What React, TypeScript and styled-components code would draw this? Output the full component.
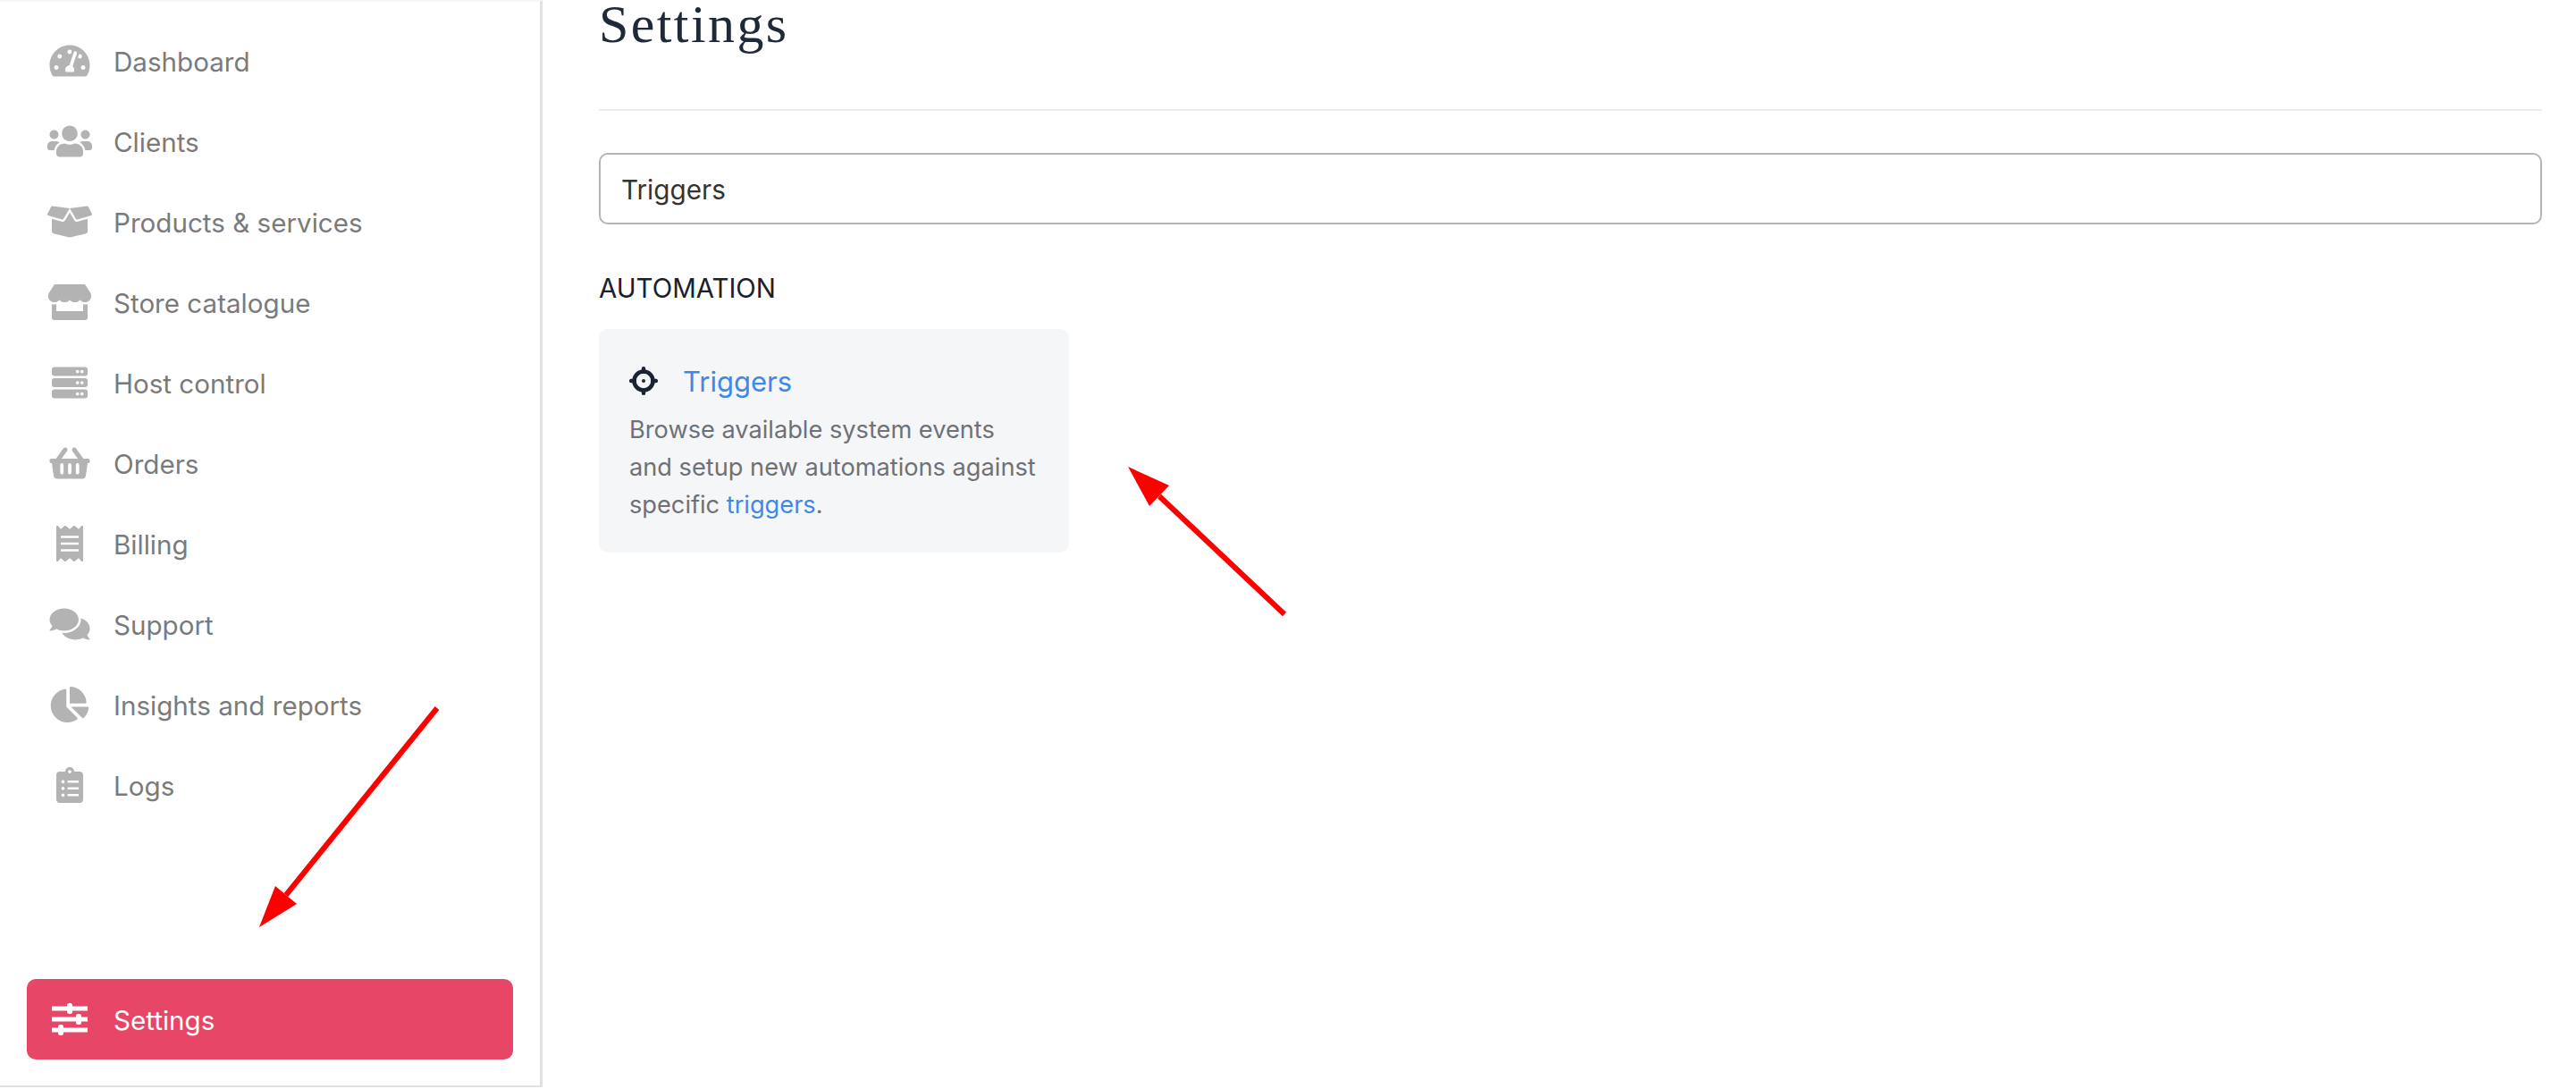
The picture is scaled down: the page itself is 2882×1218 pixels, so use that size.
import React from 'react'
import styled, { createGlobalStyle } from 'styled-components'
import {
  FaTachometerAlt,
  FaUsers,
  FaBoxOpen,
  FaStore,
  FaServer,
  FaShoppingBasket,
  FaReceipt,
  FaComments,
  FaChartPie,
  FaClipboardList,
} from 'react-icons/fa'

const GlobalStyle = createGlobalStyle`
  html, body {
    margin: 0;
    height: 100%;
    background: #fff;
    overflow: hidden;
  }
`

const Page = styled.div`
  position: relative;
  display: flex;
  width: 2882px;
  height: 1218px;
  overflow: hidden;
  font-family: Inter, 'Liberation Sans', sans-serif;
`

const Sidebar = styled.aside`
  display: flex;
  flex-direction: column;
  box-sizing: border-box;
  width: 607px;
  height: 1216px;
  padding: 21px 30px 29px 30px;
  border-top: 2px solid #f8f8f8;
  border-right: 3px solid #e0e0e0;
  border-bottom: 2px solid #e2e2e2;
`

const NavItem = styled.a<{ $active?: boolean }>`
  display: flex;
  align-items: center;
  height: 90px;
  margin-top: ${({ $active }) => ($active ? 'auto' : '0')};
  padding-left: 20px;
  border-radius: 10px;
  font-size: 29.6px;
  color: ${({ $active }) => ($active ? '#fff' : '#7a7a7a')};
  background: ${({ $active }) => ($active ? '#e84667' : 'transparent')};
`

const IconSlot = styled.span<{ $active?: boolean }>`
  display: flex;
  align-items: center;
  justify-content: center;
  flex: none;
  width: 56px;
  margin-right: 21px;
  color: ${({ $active }) => ($active ? '#fff' : '#b3b3b3')};

  svg {
    width: 56px;
    height: ${({ $active }) => ($active ? '36px' : '40px')};
  }
`

const NavLabel = styled.span`
  margin-top: 2px;
`

const Main = styled.main`
  flex: 1;
  padding: 0 38px 0 63px;
  min-width: 0;
`

const Title = styled.h1`
  margin: 0;
  height: 78px;
  padding-bottom: 44px;
  border-bottom: 2px solid #ececec;
  font-family: 'Liberation Serif', serif;
  font-size: 60px;
  font-weight: 400;
  line-height: 54px;
  letter-spacing: 2.4px;
  color: #1f2937;
`

const SearchInput = styled.input`
  display: block;
  box-sizing: border-box;
  width: 100%;
  height: 80px;
  margin-top: 47px;
  padding: 2px 23px 0;
  border: 2px solid #b5b5b5;
  border-radius: 10px;
  font-family: inherit;
  font-size: 29.7px;
  color: #333;
  outline: none;
`

const GroupLabel = styled.h2`
  margin: 54px 0 0;
  font-size: 29.4px;
  font-weight: 400;
  line-height: 36px;
  color: #1a202c;
`

const Card = styled.div`
  box-sizing: border-box;
  width: 526px;
  height: 250px;
  margin-top: 27px;
  padding: 36px 30px 0 34px;
  border-radius: 10px;
  background: #f5f6f8;
`

const CardHead = styled.div`
  display: flex;
  align-items: center;
  height: 44px;
`

const CardLink = styled.a`
  margin-left: 28px;
  font-size: 31px;
  color: #4088e8;
`

const CardText = styled.p`
  margin: 12px 0 0;
  font-size: 27.2px;
  line-height: 42px;
  color: #6f7177;
  white-space: nowrap;
`

const InlineLink = styled.a`
  color: #4088e8;
`

const ArrowLayer = styled.svg`
  position: absolute;
  top: 0;
  left: 0;
  width: 2882px;
  height: 1218px;
  pointer-events: none;
`

const SlidersIcon = () => (
  <svg viewBox="0 0 40 36" fill="#fff">
    <rect x="0" y="3.5" width="40" height="5" />
    <rect x="17" y="0" width="6" height="12" rx="2.5" />
    <rect x="0" y="15.5" width="40" height="5" />
    <rect x="27" y="12" width="6" height="12" rx="2.5" />
    <rect x="0" y="27.5" width="40" height="5" />
    <rect x="7" y="24" width="6" height="12" rx="2.5" />
  </svg>
)

const TargetIcon = () => (
  <svg width="32" height="32" viewBox="0 0 32 32" fill="#1a2433">
    <circle cx="16" cy="16" r="10.5" fill="none" stroke="#1a2433" strokeWidth="4.5" />
    <rect x="13.8" y="0" width="4.4" height="8" rx="2" />
    <rect x="13.8" y="24" width="4.4" height="8" rx="2" />
    <rect x="0" y="13.8" width="8" height="4.4" rx="2" />
    <rect x="24" y="13.8" width="8" height="4.4" rx="2" />
    <circle cx="16" cy="16" r="2" />
  </svg>
)

const navItems = [
  { label: 'Dashboard', icon: <FaTachometerAlt /> },
  { label: 'Clients', icon: <FaUsers /> },
  { label: 'Products & services', icon: <FaBoxOpen /> },
  { label: 'Store catalogue', icon: <FaStore /> },
  { label: 'Host control', icon: <FaServer /> },
  { label: 'Orders', icon: <FaShoppingBasket /> },
  { label: 'Billing', icon: <FaReceipt /> },
  { label: 'Support', icon: <FaComments /> },
  { label: 'Insights and reports', icon: <FaChartPie /> },
  { label: 'Logs', icon: <FaClipboardList /> },
]

export default function App() {
  return (
    <Page>
      <GlobalStyle />
      <Sidebar>
        {navItems.map((item) => (
          <NavItem key={item.label}>
            <IconSlot>{item.icon}</IconSlot>
            <NavLabel>{item.label}</NavLabel>
          </NavItem>
        ))}
        <NavItem $active>
          <IconSlot $active>
            <SlidersIcon />
          </IconSlot>
          <NavLabel>Settings</NavLabel>
        </NavItem>
      </Sidebar>
      <Main>
        <Title>Settings</Title>
        <SearchInput defaultValue="Triggers" />
        <GroupLabel>AUTOMATION</GroupLabel>
        <Card>
          <CardHead>
            <TargetIcon />
            <CardLink>Triggers</CardLink>
          </CardHead>
          <CardText>
            Browse available system events
            <br />
            and setup new automations against
            <br />
            specific <InlineLink>triggers</InlineLink>.
          </CardText>
        </Card>
      </Main>
      <ArrowLayer viewBox="0 0 2882 1218">
        <line x1="489" y1="792" x2="320" y2="1001" stroke="#f00" strokeWidth="6" />
        <polygon points="290,1037 308,991 332,1011" fill="#f00" />
        <line x1="1437" y1="687" x2="1297" y2="555" stroke="#f00" strokeWidth="6" />
        <polygon points="1262,522 1308,543 1286,566" fill="#f00" />
      </ArrowLayer>
    </Page>
  )
}
